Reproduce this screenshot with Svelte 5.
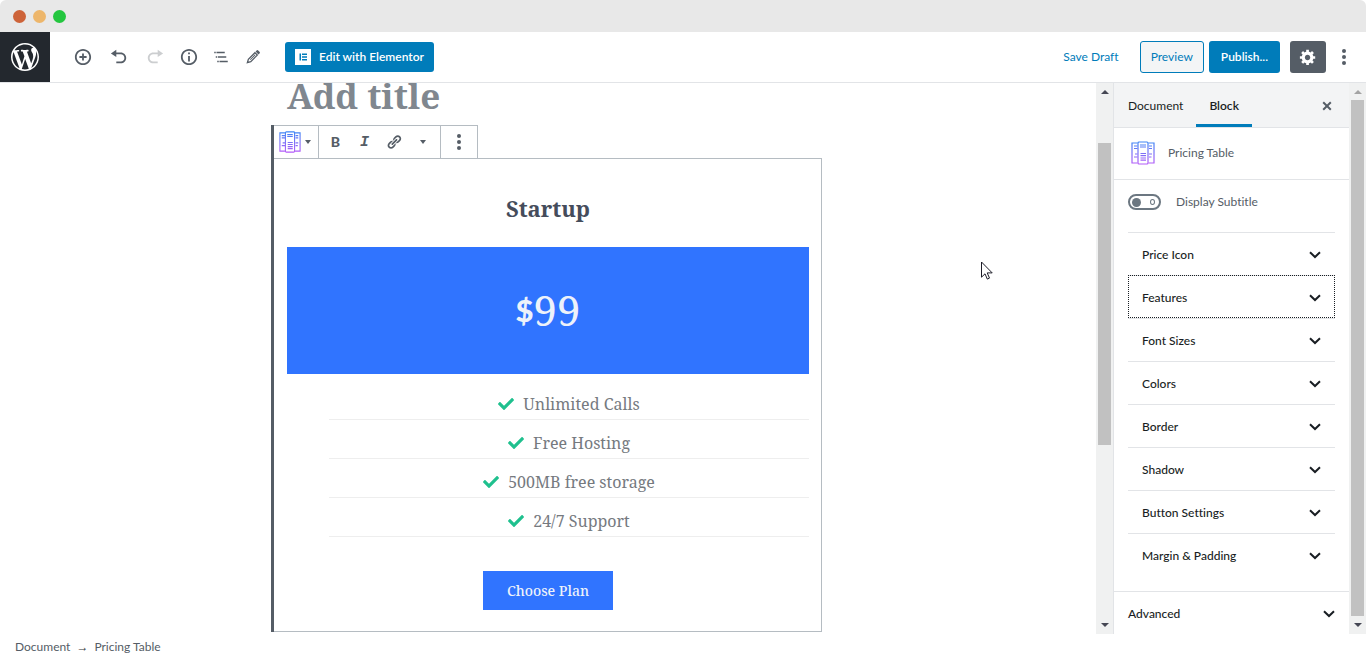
<script lang="ts">
  interface Panel {
    title: string;
    focused?: boolean;
  }

  const features = ['Unlimited Calls', 'Free Hosting', '500MB free storage', '24/7 Support'];

  const panels: Panel[] = [
    { title: 'Price Icon' },
    { title: 'Features', focused: true },
    { title: 'Font Sizes' },
    { title: 'Colors' },
    { title: 'Border' },
    { title: 'Shadow' },
    { title: 'Button Settings' },
    { title: 'Margin & Padding' }
  ];

  let displaySubtitle = $state(false);
  let activeTab = $state('Block');
</script>

{#snippet pricingIcon()}
  <svg class="pricing-icon" viewBox="0 0 24 24" aria-hidden="true">
    <defs>
      <linearGradient id="pricing-stroke" x1="0" y1="1" x2="0" y2="23" gradientUnits="userSpaceOnUse">
        <stop offset="0" stop-color="#3f86f5" />
        <stop offset="1" stop-color="#b45cf8" />
      </linearGradient>
    </defs>
    <g fill="none" stroke="url(#pricing-stroke)" stroke-width="1.2">
      <rect x="7" y="1" width="10" height="22" rx="1" />
      <path d="M6.5 2H1v20h5.5M17.5 2H23v20h-5.5" />
      <path d="M3 5h3.5M3 7.5h3.5M4 13h2.5M3 16h3.5M18 5h3M18 7.5h3M18 13h3M18 16h2.5M9 4h6M9 6h6M9.5 12.5h5.5M9.5 14.7h5.5M9.5 17h5.5M9.5 19.2h5.5" />
    </g>
  </svg>
{/snippet}

{#snippet chevron()}
  <svg class="chevron" viewBox="0 0 12 8" aria-hidden="true">
    <path d="M1 1.2l5 4.8 5-4.8" fill="none" stroke="currentColor" stroke-width="2" />
  </svg>
{/snippet}

{#snippet kebab()}
  <svg class="kebab" viewBox="0 0 6 18" aria-hidden="true">
    <circle cx="3" cy="3" r="2" /><circle cx="3" cy="9" r="2" /><circle cx="3" cy="15" r="2" />
  </svg>
{/snippet}

<div class="window">
  <div class="chrome">
    <span class="light red"></span>
    <span class="light amber"></span>
    <span class="light green"></span>
  </div>

  <header class="topbar">
    <a class="wp-logo" href="#dashboard" aria-label="View posts">
      <svg viewBox="0 0 20 20" aria-hidden="true">
        <path d="M20 10c0-5.51-4.49-10-10-10C4.48 0 0 4.49 0 10c0 5.52 4.48 10 10 10 5.51 0 10-4.48 10-10zM7.78 15.37L4.37 6.22c.55-.02 1.17-.08 1.17-.08.5-.06.44-1.13-.06-1.11 0 0-1.45.11-2.37.11-.18 0-.37 0-.58-.01C4.12 2.69 6.87 1.11 10 1.11c2.33 0 4.45.87 6.05 2.34-.68-.11-1.65.39-1.65 1.58 0 .74.45 1.36.9 2.1.35.61.55 1.36.55 2.46 0 1.49-1.4 5-1.4 5l-3.03-8.37c.54-.02.82-.17.82-.17.5-.05.44-1.25-.06-1.22 0 0-1.44.12-2.38.12-.87 0-2.33-.12-2.33-.12-.5-.03-.56 1.2-.06 1.22l.92.08 1.26 3.41zM17.41 10c.24-.64.74-1.87.43-4.25.7 1.29 1.05 2.71 1.05 4.25 0 3.29-1.73 6.24-4.4 7.78.97-2.59 1.94-5.2 2.92-7.78zM6.1 18.09C3.12 16.65 1.11 13.53 1.11 10c0-1.3.23-2.48.72-3.59C3.25 10.3 4.67 14.2 6.1 18.09zm4.03-6.63l2.58 6.98c-.86.29-1.76.45-2.71.45-.79 0-1.57-.11-2.29-.33.81-2.38 1.62-4.74 2.42-7.1z" />
      </svg>
    </a>

    <div class="tools">
      <button type="button" aria-label="Add block">
        <svg viewBox="0 0 20 20"><path d="M10 1c-5 0-9 4-9 9s4 9 9 9 9-4 9-9-4-9-9-9zm0 16c-3.9 0-7-3.1-7-7s3.1-7 7-7 7 3.1 7 7-3.1 7-7 7zm1-11H9v3H6v2h3v3h2v-3h3V9h-3V6z" /></svg>
      </button>
      <button type="button" aria-label="Undo">
        <svg viewBox="0 0 20 20"><path d="M12 5H7V2L1 6l6 4V7h5c2.2 0 4 1.8 4 4s-1.8 4-4 4H7v2h5c3.3 0 6-2.7 6-6s-2.7-6-6-6z" /></svg>
      </button>
      <button type="button" aria-label="Redo" disabled>
        <svg viewBox="0 0 20 20"><path d="M8 5h5V2l6 4-6 4V7H8c-2.2 0-4 1.8-4 4s1.8 4 4 4h5v2H8c-3.3 0-6-2.7-6-6s2.7-6 6-6z" /></svg>
      </button>
    </div>
    <div class="tools narrow">
      <button type="button" aria-label="Content structure">
        <svg viewBox="0 0 20 20"><path d="M10 1c-5 0-9 4-9 9s4 9 9 9 9-4 9-9-4-9-9-9zm0 16c-3.9 0-7-3.1-7-7s3.1-7 7-7 7 3.1 7 7-3.1 7-7 7zM9 5h2v2H9zm0 4h2v6H9z" /></svg>
      </button>
      <button type="button" aria-label="Block navigation">
        <svg viewBox="0 0 24 24"><path d="M5 5H3v2h2V5zm3 8h11v-2H8v2zm9-8H6v2h11V5zM7 11H5v2h2v-2zm0 8h2v-2H7v2zm3-2v2h11v-2H10z" /></svg>
      </button>
      <button type="button" aria-label="Edit mode">
        <svg viewBox="0 0 20 20">
          <path d="M3 17l1.2-4.2 8.2-8.2 3 3-8.2 8.2z" fill="none" stroke="currentColor" stroke-width="1.6" />
          <path d="M13.2 3.2l1.3-1.3a1.3 1.3 0 012 0l1.6 1.6a1.3 1.3 0 010 2l-1.3 1.3zM2.2 17.8l.8-3.2 2.4 2.4zM6.2 13l6-6 .8.8-6 6z" />
        </svg>
      </button>
    </div>

    <button class="primary elementor" type="button">
      <svg viewBox="0 0 16 16" aria-hidden="true">
        <path d="M0 0h16v16H0z" fill="#fff" />
        <path d="M4.5 4.5H6v7H4.5zM7 4.5h5V6H7zM7 7.3h5v1.4H7zM7 10h5v1.5H7z" fill="#007cba" />
      </svg>
      Edit with Elementor
    </button>

    <div class="settings">
      <button class="link" type="button">Save Draft</button>
      <button class="preview" type="button">Preview</button>
      <button class="primary" type="button">Publish...</button>
      <button class="gear" type="button" aria-label="Settings">
        <svg viewBox="0 0 20 20"><path d="M18 12h-2.18c-.17.7-.44 1.35-.81 1.93l1.54 1.54-2.1 2.1-1.54-1.54c-.58.36-1.23.63-1.91.79V19H8v-2.18c-.68-.16-1.33-.43-1.91-.79l-1.54 1.54-2.12-2.12 1.54-1.54c-.36-.58-.63-1.23-.79-1.91H1V9.03h2.17c.16-.7.44-1.35.8-1.94L2.43 5.55l2.1-2.1 1.54 1.54c.58-.37 1.24-.64 1.93-.81V2h3v2.18c.68.16 1.33.43 1.91.79l1.54-1.54 2.12 2.12-1.54 1.54c.36.59.64 1.24.8 1.94H18V12zm-8.5 1.5c1.66 0 3-1.34 3-3s-1.34-3-3-3-3 1.34-3 3 1.34 3 3 3z" /></svg>
      </button>
      <button class="more" type="button" aria-label="More tools">{@render kebab()}</button>
    </div>
  </header>

  <div class="body">
    <main class="canvas">
      <div class="column">
        <h1>Add title</h1>

        <section class="block">
          <div class="block-toolbar">
            <div class="group">
              <button class="switcher" type="button" aria-label="Change block type">
                {@render pricingIcon()}
                <span class="caret"></span>
              </button>
            </div>
            <div class="group format">
              <button class="bold" type="button" aria-label="Bold">B</button>
              <button class="italic" type="button" aria-label="Italic">I</button>
              <button type="button" aria-label="Link">
                <svg viewBox="0 0 20 20"><path d="M17.74 2.76c1.68 1.69 1.68 4.41 0 6.1l-1.53 1.52c-1.12 1.12-2.7 1.47-4.14 1.09l2.62-2.61.76-.77.76-.76c.84-.84.84-2.2 0-3.04-.84-.85-2.2-.85-3.04 0l-.77.76-3.38 3.38c-.37-1.44-.02-3.02 1.1-4.14l1.52-1.53c1.69-1.68 4.42-1.68 6.1 0zM8.59 13.43l5.34-5.34c.42-.42.42-1.1 0-1.52-.44-.43-1.13-.39-1.53 0l-5.33 5.34c-.42.42-.42 1.1 0 1.52.44.43 1.13.39 1.52 0zm-.76 2.29l4.14-4.15c.38 1.44.03 3.02-1.09 4.14l-1.52 1.53c-1.69 1.68-4.41 1.68-6.1 0-1.68-1.68-1.68-4.42 0-6.1l1.53-1.52c1.12-1.12 2.7-1.47 4.14-1.1l-4.14 4.15c-.85.84-.85 2.2 0 3.05.84.84 2.2.84 3.04 0z" /></svg>
              </button>
              <button type="button" aria-label="More rich text controls"><span class="caret"></span></button>
            </div>
            <div class="group">
              <button class="options" type="button" aria-label="More options">{@render kebab()}</button>
            </div>
          </div>

          <div class="card">
            <h2>Startup</h2>
            <p class="price"><span class="currency">$</span>99</p>
            <ul>
              {#each features as feature}
                <li>
                  <svg viewBox="0 0 512 512" aria-hidden="true"><path d="M173.898 439.404l-166.4-166.4c-9.997-9.997-9.997-26.206 0-36.204l36.203-36.204c9.997-9.998 26.207-9.998 36.204 0L192 312.69 432.095 72.596c9.997-9.997 26.207-9.997 36.204 0l36.203 36.204c9.997 9.997 9.997 26.206 0 36.204l-294.4 294.401c-9.998 9.997-26.207 9.997-36.204-.001z" /></svg>
                  {feature}
                </li>
              {/each}
            </ul>
            <button class="choose" type="button">Choose Plan</button>
          </div>
        </section>
      </div>

      <svg class="pointer" viewBox="0 0 12 19" aria-hidden="true">
        <path d="M.5 1v15.2l3.5-3.4 2.3 5.3 2.2-1-2.3-5.2h5z" fill="#fff" stroke="#1c1c28" />
      </svg>
    </main>

    <div class="scrollbar" aria-hidden="true">
      <span class="arrow up"></span>
      <div class="track"><div class="before"></div><div class="thumb"></div><div class="after"></div></div>
      <span class="arrow down"></span>
    </div>

    <aside class="sidebar">
      <div class="tabs" role="tablist">
        {#each ['Document', 'Block'] as tab}
          <button
            type="button"
            role="tab"
            class:active={activeTab === tab}
            aria-selected={activeTab === tab}
            onclick={() => (activeTab = tab)}>{tab}</button>
        {/each}
        <button class="close" type="button" aria-label="Close settings">
          <svg viewBox="0 0 10 10"><path d="M1.2 1.2l7.6 7.6M8.8 1.2L1.2 8.8" fill="none" stroke="currentColor" stroke-width="2" /></svg>
        </button>
      </div>

      <div class="block-card">
        {@render pricingIcon()}
        <span>Pricing Table</span>
      </div>

      <div class="inspector">
        <label class="toggle">
          <span class="switch">
            <input type="checkbox" bind:checked={displaySubtitle} />
            <span class="knob"></span>
            <span class="off"></span>
          </span>
          Display Subtitle
        </label>

        <div class="panels">
          {#each panels as panel}
            <button type="button" class="panel" class:focused={panel.focused} aria-expanded="false">
              {panel.title}
              {@render chevron()}
            </button>
          {/each}
        </div>
      </div>

      <button type="button" class="advanced" aria-expanded="false">
        Advanced
        {@render chevron()}
      </button>
    </aside>

    <div class="scrollbar" aria-hidden="true">
      <span class="arrow up muted"></span>
      <div class="track"><div class="thumb"></div></div>
      <span class="arrow down"></span>
    </div>
  </div>

  <footer>
    <span>Document</span>
    <span class="sep">→</span>
    <span>Pricing Table</span>
  </footer>
</div>

<style>
  :global(body) {
    margin: 0;
    background: #fff;
  }

  .window {
    --serif: 'Noto Serif', 'DejaVu Serif', serif;
    display: flex;
    flex-direction: column;
    height: 100vh;
    font: 12px/18px 'Segoe UI', Lato, sans-serif;
    font-variant-ligatures: none;
    color: #555d66;
  }

  button {
    display: flex;
    align-items: center;
    justify-content: center;
    padding: 0;
    border: 0;
    background: none;
    font: inherit;
    color: inherit;
    cursor: pointer;
  }

  svg {
    display: block;
    fill: currentColor;
  }

  .chrome {
    display: flex;
    align-items: center;
    gap: 7px;
    height: 32px;
    padding: 1px 13px 0;
    box-sizing: border-box;
    border-radius: 6px 6px 0 0;
    background: #e8e8e8;
  }
  .light {
    width: 13px;
    height: 13px;
    border-radius: 50%;
  }
  .red {
    background: #cd6339;
  }
  .amber {
    background: #edb66b;
  }
  .green {
    background: #24c63f;
  }

  .topbar {
    display: flex;
    align-items: center;
    height: 50px;
    border-bottom: 1px solid #e2e4e7;
  }
  .wp-logo {
    display: flex;
    align-items: center;
    justify-content: center;
    width: 50px;
    height: 50px;
    background: #23282e;
    color: #fff;
  }
  .wp-logo svg {
    width: 28px;
    height: 28px;
  }
  .tools {
    display: flex;
    margin-left: 15px;
  }
  .tools button {
    width: 36px;
    height: 36px;
  }
  .narrow {
    margin: 0 16px 0 0;
  }
  .narrow button {
    width: 32px;
  }
  .tools svg {
    width: 18px;
    height: 18px;
  }
  .narrow button:last-child svg {
    width: 16px;
    height: 16px;
  }
  .tools button:disabled {
    color: #ccced0;
  }
  .primary {
    height: 32px;
    padding: 0 12px;
    border-radius: 3px;
    background: #007cba;
    color: #fff;
    font-weight: 600;
  }
  .elementor {
    gap: 8px;
    height: 30px;
    padding: 0 10px;
  }
  .elementor svg {
    width: 16px;
    height: 16px;
  }
  .settings {
    display: flex;
    align-items: center;
    margin-left: auto;
  }
  .link {
    margin-right: 21px;
    color: #007cba;
  }
  .preview {
    height: 32px;
    margin-right: 5px;
    padding: 0 10px;
    border: 1px solid #007cba;
    border-radius: 3px;
    background: #f3f5f6;
    color: #007cba;
  }
  .gear {
    width: 36px;
    height: 32px;
    margin-left: 10px;
    border-radius: 3px;
    background: #555d66;
    color: #fff;
  }
  .gear svg {
    width: 18px;
    height: 18px;
  }
  .more {
    width: 36px;
    height: 32px;
    margin-right: 4px;
  }
  .kebab {
    width: 6px;
    height: 18px;
  }

  .body {
    display: flex;
    flex: 1;
    min-height: 0;
  }
  .canvas {
    position: relative;
    flex: 1;
    min-width: 0;
    overflow: hidden;
  }
  .column {
    max-width: 522px;
    margin: 0 auto;
  }
  h1 {
    margin: 0 0 17px;
    font: bold 35px/25px var(--serif);
    color: #80878f;
  }
  .block {
    margin: 0 -13px 0 -16px;
    border-left: 3px solid #555d66;
  }
  .block-toolbar {
    display: flex;
    width: max-content;
    border-top: 1px solid #b5bcc2;
  }
  .group {
    display: flex;
    align-items: center;
    height: 32px;
    border-right: 1px solid #b5bcc2;
  }
  .switcher {
    gap: 4px;
    width: 44px;
    padding-right: 2px;
  }
  .switcher .pricing-icon {
    width: 22px;
    height: 22px;
  }
  .caret {
    border: 3px solid transparent;
    border-top: 4px solid currentColor;
    border-bottom: 0;
  }
  .format {
    padding: 0 3px 0 2px;
  }
  .format button {
    width: 29px;
    height: 32px;
  }
  .format svg {
    width: 16px;
    height: 16px;
  }
  .bold {
    font-size: 14px;
    font-weight: 900;
  }
  .italic {
    padding-top: 2px;
    font: italic bold 15px/18px 'Liberation Mono', monospace;
  }
  .options {
    width: 36px;
    height: 32px;
  }

  .card {
    display: flex;
    flex-direction: column;
    align-items: center;
    padding: 34px 12px 21px 13px;
    border: solid #b5bcc2;
    border-width: 1px 1px 1px 0;
  }
  h2 {
    margin: 0;
    font: bold 22px/30px var(--serif);
    color: #454c5b;
  }
  .price {
    display: flex;
    align-items: center;
    justify-content: center;
    align-self: stretch;
    height: 127px;
    margin: 24px 0 7px;
    padding-bottom: 2px;
    box-sizing: border-box;
    background: #3074ff;
    color: #edf2fa;
    font: 42px/42px var(--serif);
  }
  .currency {
    font: 900 31px/42px Lato, sans-serif;
  }
  ul {
    align-self: stretch;
    margin: 0 0 34px;
    padding: 0 0 0 42px;
    list-style: none;
    font: 16px/24px var(--serif);
    color: #767a7f;
  }
  li {
    display: flex;
    align-items: center;
    justify-content: center;
    gap: 9px;
    height: 39px;
    padding-top: 8px;
    box-sizing: border-box;
    border-bottom: 1px solid #eee;
  }
  li svg {
    width: 16px;
    height: 16px;
    fill: #1fc08e;
  }
  .choose {
    width: 130px;
    height: 39px;
    background: #3074ff;
    color: #edf2fa;
    font: 500 14px/20px var(--serif);
  }

  .pointer {
    position: absolute;
    top: 178px;
    left: calc(50% + 433px);
    width: 12px;
    height: 19px;
  }

  .scrollbar {
    display: flex;
    flex-direction: column;
    align-items: center;
    width: 17px;
    box-sizing: border-box;
    padding: 7px 0 7px;
    background: #f0f1f1;
  }
  .track {
    display: flex;
    flex: 1;
    flex-direction: column;
    width: 13px;
    padding: 6px 0 7px;
  }
  .before {
    flex: 43;
  }
  .thumb {
    flex: 302;
    background: #c1c1c1;
  }
  .after {
    flex: 171;
  }
  .arrow {
    border: 4px solid transparent;
  }
  .up {
    border-top: 0;
    border-bottom-color: #454754;
  }
  .down {
    border-bottom: 0;
    border-top-color: #454754;
  }
  .muted {
    border-bottom-color: #a3a3a3;
  }

  .sidebar {
    display: flex;
    flex-direction: column;
    width: 235px;
    border-left: 1px solid #e2e4e7;
    color: #191e23;
  }
  .tabs {
    display: flex;
    height: 44px;
    border-bottom: 1px solid #e2e4e7;
    background: #f3f4f5;
  }
  .tabs button {
    padding: 4px 13px 0 14px;
    border-bottom: 3px solid transparent;
  }
  .tabs .active {
    padding: 4px 13px 0;
    border-bottom-color: #007cba;
    font-weight: 600;
  }
  .tabs .close {
    margin-left: auto;
    padding: 4px 17px 0;
    color: #555d66;
  }
  .close svg {
    width: 10px;
    height: 10px;
  }
  .block-card {
    display: flex;
    align-items: center;
    gap: 13px;
    height: 51px;
    padding: 0 17px 2px;
    border-bottom: 1px solid #e2e4e7;
    box-sizing: content-box;
    height: 49px;
    color: #555d66;
  }
  .block-card .pricing-icon {
    width: 24px;
    height: 24px;
  }
  .inspector {
    flex: 1;
    padding: 12px 14px 15px;
  }
  .toggle {
    display: flex;
    align-items: center;
    gap: 15px;
    height: 20px;
    margin-bottom: 20px;
    color: #555d66;
  }
  .switch {
    position: relative;
    display: flex;
    align-items: center;
    justify-content: space-between;
    width: 33px;
    height: 16px;
    padding: 0 4px 0 2px;
    box-sizing: border-box;
    border: 2px solid #6c7781;
    border-radius: 8px;
  }
  .switch input {
    position: absolute;
    inset: 0;
    margin: 0;
    opacity: 0;
  }
  .knob {
    width: 9px;
    height: 9px;
    border-radius: 50%;
    background: #6c7781;
  }
  .off {
    width: 3px;
    height: 4px;
    border: 1px solid #6c7781;
    border-radius: 50%;
  }
  .switch:has(input:checked) {
    flex-direction: row-reverse;
  }
  .panel,
  .advanced {
    justify-content: space-between;
    width: 100%;
    height: 43px;
    box-sizing: border-box;
    padding: 1px 14px 0;
    border-top: 1px solid #e2e4e7;
    font-weight: 500;
  }
  .panel.focused {
    outline: 1px dotted #191e23;
    outline-offset: -1px;
  }
  .chevron {
    width: 12px;
    height: 8px;
  }

  footer {
    display: flex;
    align-items: center;
    gap: 6px;
    height: 22px;
    padding: 3px 15px 0;
    box-sizing: border-box;
  }
  .sep {
    font-family: 'Open Sans', sans-serif;
    color: #32373c;
  }
</style>
